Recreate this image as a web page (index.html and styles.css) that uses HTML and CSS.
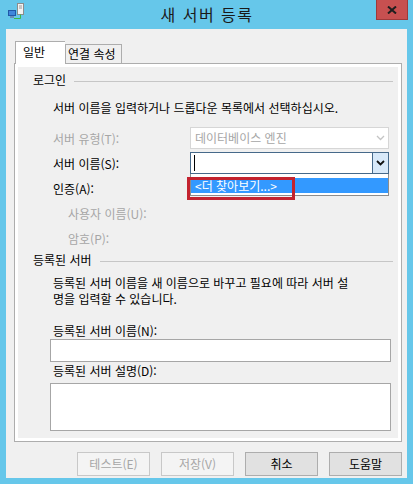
FILE: index.html
```html
<!DOCTYPE html>
<html lang="ko">
<head>
    <meta charset="utf-8" />
    <title>새 서버 등록</title>
    <link rel="stylesheet" href="styles.css">
</head>
<body>

<div class="window">
    <div class="titlebar">
        <svg class="app-icon" width="18" height="18" viewBox="0 0 18 18">
            <rect x="9.5" y="0.5" width="6" height="11" fill="#f2f2f2" stroke="#8c8c8c" />
            <line x1="11" y1="3" x2="14" y2="3" stroke="#9a9a9a" />
            <line x1="11" y1="5" x2="14" y2="5" stroke="#9a9a9a" />
            <rect x="0.5" y="7.5" width="7" height="5" fill="#3f86dc" stroke="#1f58a8" />
            <rect x="2" y="13" width="4" height="2" fill="#6a8fb8" />
            <path d="M6 15.5 H12.5 V11.5" fill="none" stroke="#3cb84a" stroke-width="1" />
        </svg>
        <div class="title">새 서버 등록</div>
        <div class="close">
            <svg width="10" height="8" viewBox="0 0 10 8">
                <path d="M1 0.5 L9 7.5 M9 0.5 L1 7.5" stroke="#1e1e1e" stroke-width="2" />
            </svg>
        </div>
    </div>

    <div class="client">
        <div class="tabs">
            <div class="tab active">일반</div>
            <div class="tab">연결 속성</div>
        </div>

        <div class="panel">
            <div class="group-head"><span>로그인</span><i class="rule"></i></div>
            <p class="desc">서버 이름을 입력하거나 드롭다운 목록에서 선택하십시오.</p>

            <div class="rows">
                <div class="row off">
                    <label>서버 유형(T):</label>
                    <div class="combo combo-off">
                        <span class="combo-text">데이터베이스 엔진</span>
                        <span class="combo-btn">
                            <svg width="9" height="6" viewBox="0 0 9 6"><polyline points="1,1 4.5,4.5 8,1" fill="none" stroke="#c4c4c4" stroke-width="1.3" /></svg>
                        </span>
                    </div>
                </div>
                <div class="row">
                    <label>서버 이름(S):</label>
                    <div class="combo combo-focus">
                        <span class="combo-text"><i class="caret"></i></span>
                        <span class="combo-btn">
                            <svg width="9" height="6" viewBox="0 0 9 6"><polyline points="1,1 4.5,4.5 8,1" fill="none" stroke="#111" stroke-width="1.8" /></svg>
                        </span>
                        <div class="droplist">
                            <div class="drop-item">&lt;더 찾아보기...&gt;</div>
                        </div>
                        <div class="mark"></div>
                    </div>
                </div>
                <div class="row">
                    <label>인증(A):</label>
                </div>
                <div class="row sub off">
                    <label>사용자 이름(U):</label>
                </div>
                <div class="row sub off">
                    <label>암호(P):</label>
                </div>
            </div>

            <div class="group-head group-2"><span>등록된 서버</span><i class="rule"></i></div>
            <p class="desc desc-2">등록된 서버 이름을 새 이름으로 바꾸고 필요에 따라 서버 설<br />명을 입력할 수 있습니다.</p>

            <div class="field-label label-name">등록된 서버 이름(N):</div>
            <div class="textbox"></div>
            <div class="field-label label-desc">등록된 서버 설명(D):</div>
            <div class="textbox textarea"></div>
        </div>

        <div class="buttons">
            <div class="btn btn-off">테스트(E)</div>
            <div class="btn btn-off">저장(V)</div>
            <div class="btn">취소</div>
            <div class="btn">도움말</div>
        </div>
    </div>
</div>

</body>
</html>
```

FILE: styles.css
```css
* { padding: 0; margin: 0; box-sizing: border-box; }

body { background: #66c7ea; font-family: "Noto Sans CJK KR", "Noto Sans", sans-serif; font-size: 12px; color: #000; }

.window { width: 413px; height: 484px; display: flex; flex-direction: column; }

/* title bar */
.titlebar { height: 29px; display: flex; align-items: flex-start; padding: 0 5px 0 8px; }
.app-icon { margin-top: 3px; flex: none; }
.title { flex: 1; text-align: center; font-size: 16px; line-height: 28px; letter-spacing: 1.5px; color: #1a1a1a; padding-left: 12px; }
.close { width: 32px; height: 20px; background: #c75050; border: 1px solid #9e3a3a; border-top: none; display: flex; align-items: center; justify-content: center; }

/* client area */
.client { flex: 1; margin: 0 6px 6px; background: #f0f0f0; padding: 12px 5px 2px 8px; display: flex; flex-direction: column; }

.tabs { display: flex; align-items: flex-start; padding-left: 1px; }
.tab { height: 19px; margin-top: 3px; border: 1px solid #adadad; border-bottom: none; background: #f0f0f0; padding: 0 5px 0 2px; line-height: 18px; }
.tab.active { height: 23px; margin-top: 0; margin-bottom: -1px; width: 50px; background: #fff; padding-left: 7px; line-height: 20px; z-index: 1; border-right: none; }

.panel { height: 379px; border: 1px solid #adadad; box-shadow: inset 0 0 0 3px #fff; padding: 8px 8px 0 18px; }

.group-head { height: 16px; line-height: 16px; display: flex; align-items: center; }
.group-head span { flex: none; }
.rule { flex: 1; height: 1px; background: #c6c6c6; margin-left: 8px; margin-top: 2px; }
.group-2 { margin-top: 3px; }

.desc { margin: 12px 0 0 20px; line-height: 16px; height: 16px; }
.desc-2 { margin-top: 7px; line-height: 16px; height: 32px; }

.rows { margin-top: 11px; display: flex; flex-direction: column; gap: 3px; }
.row { height: 22px; display: flex; align-items: center; padding-left: 20px; }
.row label { width: 137px; flex: none; }
.row.sub { padding-left: 35px; }
.row.off { color: #a6a6a6; }

.combo { position: relative; width: 199px; height: 22px; border: 1px solid #d6d6d6; background: #fff; display: flex; align-items: stretch; }
.combo-text { flex: 1; padding-left: 4px; line-height: 20px; display: flex; align-items: center; }
.combo-btn { width: 16px; flex: none; display: flex; align-items: center; justify-content: center; }
.combo-off { color: #a6a6a6; }
.combo-focus { border-color: #46698a; }
.combo-focus .combo-btn { border-left: 1px solid #46698a; background: #d8e9f9; }
.caret { display: block; width: 1px; height: 16px; background: #000; margin-left: -1px; }

/* open list of the combo */
.droplist { position: absolute; top: 21px; left: -1px; right: -1px; height: 22px; background: #fff; border: 1px solid #8c8c8c; border-top: none; padding: 4px 0 0; }
.drop-item { height: 15px; background: #3399ff; color: #fff; line-height: 15px; padding-left: 4px; }
.mark { position: absolute; left: -4px; top: 24px; width: 108px; height: 23px; border: 3px solid #c3232f; }

.field-label { margin-left: 20px; height: 16px; line-height: 16px; }
.label-name { margin-top: 16px; }
.label-desc { margin-top: 1px; }
.textbox { margin: 0 2px 0 17px; height: 23px; border: 1px solid #a6a6a6; background: #fff; }
.textarea { height: 48px; margin-top: 4px; }

/* bottom buttons */
.buttons { margin-top: 10px; display: flex; justify-content: flex-end; gap: 11px; }
.btn { width: 73px; height: 24px; border: 1px solid #adadad; background: #e1e1e1; text-align: center; line-height: 21px; }
.btn-off { background: #f4f4f4; border-color: #c8c8c8; color: #a6a6a6; }
```
